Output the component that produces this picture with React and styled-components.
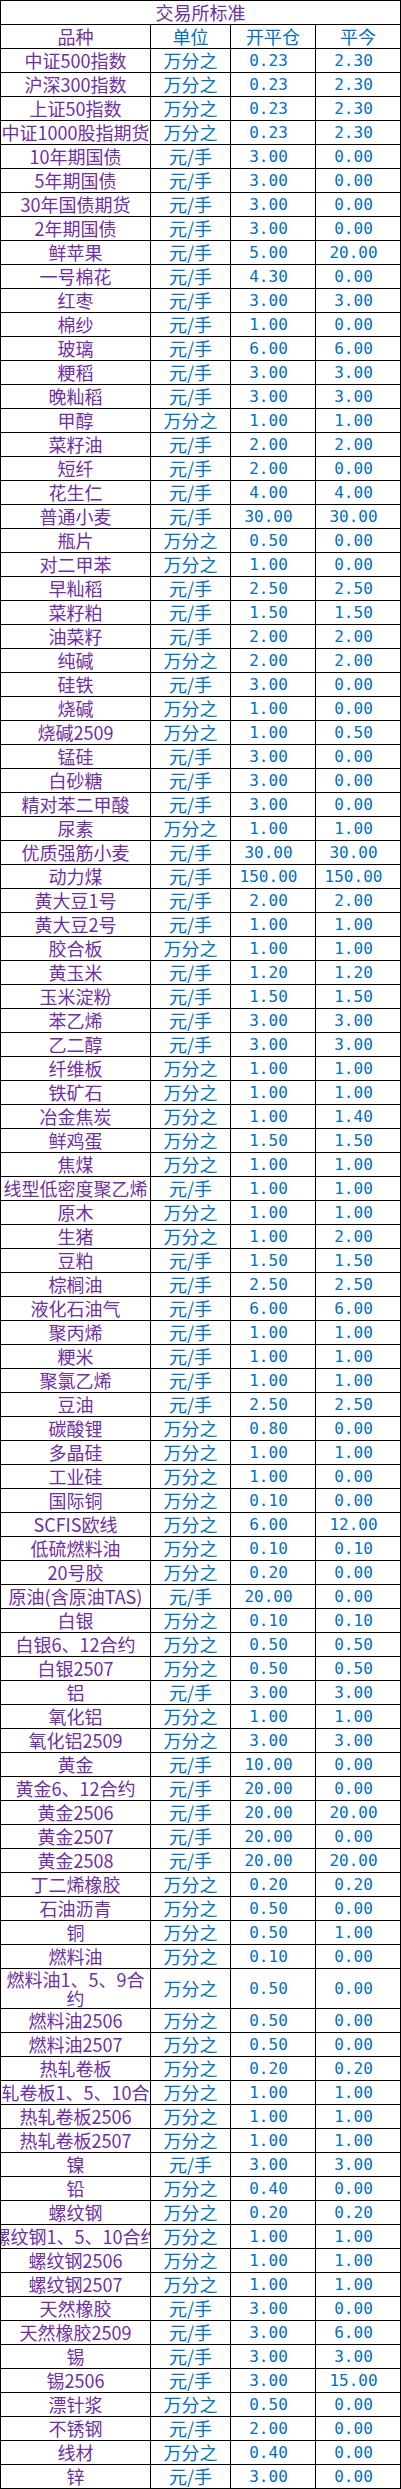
import React from "react";
import styled, { createGlobalStyle } from "styled-components";

const GlobalStyle = createGlobalStyle`
  html, body {
    margin: 0;
    padding: 0;
    background: #ffffff;
  }
  * { box-sizing: border-box; }
`;

const PURPLE = "#7030A0";
const BLUE = "#0070C0";
const CJK = `"Noto Sans CJK SC", "Noto Sans", sans-serif`;
const MONO = `"DejaVu Sans Mono", "Liberation Mono", "Noto Sans CJK SC", monospace`;

const Table = styled.div`
  width: 401px;
  display: flex;
  flex-direction: column;
  border-left: 1px solid #000;
  border-top: 1px solid #000;
  background: #fff;
`;

const TitleRow = styled.div`
  height: 24px;
  border-right: 1px solid #000;
  border-bottom: 1px solid #000;
  display: flex;
  align-items: center;
  justify-content: center;
  font-family: ${CJK};
  font-size: 18px;
  line-height: 23px;
  color: ${PURPLE};
`;

const Row = styled.div`
  display: grid;
  grid-template-columns: 150px 80px 85px 85px;
  height: ${(p) => (p.$tall ? "40px" : "24px")};
`;

const Cell = styled.div`
  border-right: 1px solid #000;
  border-bottom: 1px solid #000;
  display: flex;
  align-items: center;
  justify-content: center;
  overflow-x: ${(p) => (p.$clip ? "clip" : "visible")};
  overflow-y: visible;
  white-space: ${(p) => (p.$wrap ? "normal" : "nowrap")};
  text-align: center;
  font-family: ${CJK};
  font-size: 18px;
  line-height: ${(p) => (p.$wrap ? "19px" : "23px")};
  color: ${(p) => (p.$purple ? PURPLE : BLUE)};
`;

const NameText = styled.span`
  flex: none;
  max-width: ${(p) => (p.$wrap ? "148px" : "none")};
  word-break: ${(p) => (p.$wrap ? "break-all" : "normal")};
`;

const NumCell = styled(Cell)`
  font-family: ${MONO};
  font-size: 16px;
  padding-right: 9px;
`;

const rows = [
  ["中证500指数", "万分之", "0.23", "2.30"],
  ["沪深300指数", "万分之", "0.23", "2.30"],
  ["上证50指数", "万分之", "0.23", "2.30"],
  ["中证1000股指期货", "万分之", "0.23", "2.30"],
  ["10年期国债", "元/手", "3.00", "0.00"],
  ["5年期国债", "元/手", "3.00", "0.00"],
  ["30年国债期货", "元/手", "3.00", "0.00"],
  ["2年期国债", "元/手", "3.00", "0.00"],
  ["鲜苹果", "元/手", "5.00", "20.00"],
  ["一号棉花", "元/手", "4.30", "0.00"],
  ["红枣", "元/手", "3.00", "3.00"],
  ["棉纱", "元/手", "1.00", "0.00"],
  ["玻璃", "元/手", "6.00", "6.00"],
  ["粳稻", "元/手", "3.00", "3.00"],
  ["晚籼稻", "元/手", "3.00", "3.00"],
  ["甲醇", "万分之", "1.00", "1.00"],
  ["菜籽油", "元/手", "2.00", "2.00"],
  ["短纤", "元/手", "2.00", "0.00"],
  ["花生仁", "元/手", "4.00", "4.00"],
  ["普通小麦", "元/手", "30.00", "30.00"],
  ["瓶片", "万分之", "0.50", "0.00"],
  ["对二甲苯", "万分之", "1.00", "0.00"],
  ["早籼稻", "元/手", "2.50", "2.50"],
  ["菜籽粕", "元/手", "1.50", "1.50"],
  ["油菜籽", "元/手", "2.00", "2.00"],
  ["纯碱", "万分之", "2.00", "2.00"],
  ["硅铁", "元/手", "3.00", "0.00"],
  ["烧碱", "万分之", "1.00", "0.00"],
  ["烧碱2509", "万分之", "1.00", "0.50"],
  ["锰硅", "元/手", "3.00", "0.00"],
  ["白砂糖", "元/手", "3.00", "0.00"],
  ["精对苯二甲酸", "元/手", "3.00", "0.00"],
  ["尿素", "万分之", "1.00", "1.00"],
  ["优质强筋小麦", "元/手", "30.00", "30.00"],
  ["动力煤", "元/手", "150.00", "150.00"],
  ["黄大豆1号", "元/手", "2.00", "2.00"],
  ["黄大豆2号", "元/手", "1.00", "1.00"],
  ["胶合板", "万分之", "1.00", "1.00"],
  ["黄玉米", "元/手", "1.20", "1.20"],
  ["玉米淀粉", "元/手", "1.50", "1.50"],
  ["苯乙烯", "元/手", "3.00", "3.00"],
  ["乙二醇", "元/手", "3.00", "3.00"],
  ["纤维板", "万分之", "1.00", "1.00"],
  ["铁矿石", "万分之", "1.00", "1.00"],
  ["冶金焦炭", "万分之", "1.00", "1.40"],
  ["鲜鸡蛋", "万分之", "1.50", "1.50"],
  ["焦煤", "万分之", "1.00", "1.00"],
  ["线型低密度聚乙烯", "元/手", "1.00", "1.00"],
  ["原木", "万分之", "1.00", "1.00"],
  ["生猪", "万分之", "1.00", "2.00"],
  ["豆粕", "元/手", "1.50", "1.50"],
  ["棕榈油", "元/手", "2.50", "2.50"],
  ["液化石油气", "元/手", "6.00", "6.00"],
  ["聚丙烯", "元/手", "1.00", "1.00"],
  ["粳米", "元/手", "1.00", "1.00"],
  ["聚氯乙烯", "元/手", "1.00", "1.00"],
  ["豆油", "元/手", "2.50", "2.50"],
  ["碳酸锂", "万分之", "0.80", "0.00"],
  ["多晶硅", "万分之", "1.00", "1.00"],
  ["工业硅", "万分之", "1.00", "0.00"],
  ["国际铜", "万分之", "0.10", "0.00"],
  ["SCFIS欧线", "万分之", "6.00", "12.00"],
  ["低硫燃料油", "万分之", "0.10", "0.10"],
  ["20号胶", "万分之", "0.20", "0.00"],
  ["原油(含原油TAS)", "元/手", "20.00", "0.00"],
  ["白银", "万分之", "0.10", "0.10"],
  ["白银6、12合约", "万分之", "0.50", "0.50"],
  ["白银2507", "万分之", "0.50", "0.50"],
  ["铝", "元/手", "3.00", "3.00"],
  ["氧化铝", "万分之", "1.00", "1.00"],
  ["氧化铝2509", "万分之", "3.00", "3.00"],
  ["黄金", "元/手", "10.00", "0.00"],
  ["黄金6、12合约", "元/手", "20.00", "0.00"],
  ["黄金2506", "元/手", "20.00", "20.00"],
  ["黄金2507", "元/手", "20.00", "0.00"],
  ["黄金2508", "元/手", "20.00", "20.00"],
  ["丁二烯橡胶", "万分之", "0.20", "0.20"],
  ["石油沥青", "万分之", "0.50", "0.00"],
  ["铜", "万分之", "0.50", "1.00"],
  ["燃料油", "万分之", "0.10", "0.00"],
  ["燃料油1、5、9合约", "万分之", "0.50", "0.00", "wrap"],
  ["燃料油2506", "万分之", "0.50", "0.00"],
  ["燃料油2507", "万分之", "0.50", "0.00"],
  ["热轧卷板", "万分之", "0.20", "0.20"],
  ["热轧卷板1、5、10合约", "万分之", "1.00", "1.00", "clip"],
  ["热轧卷板2506", "万分之", "1.00", "1.00"],
  ["热轧卷板2507", "万分之", "1.00", "1.00"],
  ["镍", "元/手", "3.00", "3.00"],
  ["铅", "万分之", "0.40", "0.00"],
  ["螺纹钢", "万分之", "0.20", "0.20"],
  ["螺纹钢1、5、10合约", "万分之", "1.00", "1.00", "clip"],
  ["螺纹钢2506", "万分之", "1.00", "1.00"],
  ["螺纹钢2507", "万分之", "1.00", "1.00"],
  ["天然橡胶", "元/手", "3.00", "0.00"],
  ["天然橡胶2509", "元/手", "3.00", "6.00"],
  ["锡", "元/手", "3.00", "3.00"],
  ["锡2506", "元/手", "3.00", "15.00"],
  ["漂针浆", "万分之", "0.50", "0.00"],
  ["不锈钢", "元/手", "2.00", "0.00"],
  ["线材", "万分之", "0.40", "0.00"],
  ["锌", "元/手", "3.00", "0.00"],
];

export default function App() {
  return (
    <>
      <GlobalStyle />
      <Table>
        <TitleRow>交易所标准</TitleRow>
        <Row>
          <Cell $purple>品种</Cell>
          <Cell>单位</Cell>
          <Cell>开平仓</Cell>
          <Cell>平今</Cell>
        </Row>
        {rows.map(([name, unit, open, today, mode]) => {
          const wrap = mode === "wrap";
          const clip = mode === "clip";
          return (
            <Row key={name} $tall={wrap}>
              <Cell $purple $wrap={wrap} $clip={clip}>
                <NameText $wrap={wrap}>{name}</NameText>
              </Cell>
              <Cell>{unit}</Cell>
              <NumCell>{open}</NumCell>
              <NumCell>{today}</NumCell>
            </Row>
          );
        })}
      </Table>
    </>
  );
}
